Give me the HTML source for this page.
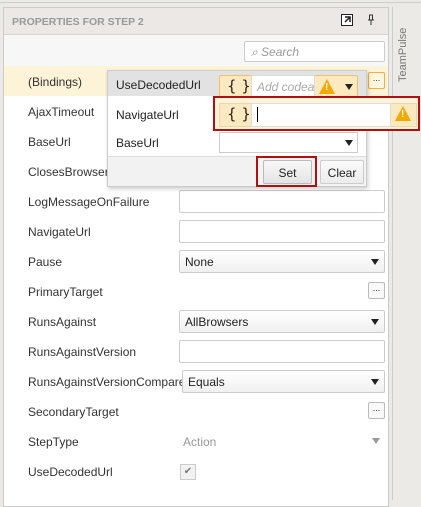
<!DOCTYPE html>
<html><head><style>
*{box-sizing:border-box;margin:0;padding:0}
body{width:421px;height:500px;background:#eceae7;font-family:"Liberation Sans",sans-serif;font-size:12px;color:#333;position:relative;overflow:hidden}
.a{position:absolute}
.panel{left:3px;top:7px;width:386px;height:500px;background:#fff;border:1px solid #ccc}
.hdr{left:4px;top:8px;width:384px;height:27px;background:#ebe8e5;border-bottom:1px solid #d8d5d2;color:#999;font-weight:bold;font-size:10.5px;padding:8px 0 0 8px}
.srow{left:4px;top:35px;width:384px;height:31px;background:#f7f7f7}
.lbl{left:28px;font-size:12px;color:#333}
.inp{left:179px;width:206px;height:23px;border:1px solid #ccc;border-radius:2px;background:#fff}
.sel{background:linear-gradient(#fff,#f0f0f0);color:#222;padding:4px 0 0 5px}
.arr{position:absolute;right:5px;top:8px;width:0;height:0;border-left:4px solid transparent;border-right:4px solid transparent;border-top:6px solid #222}
.dots{left:368px;width:17px;height:17px;border:1px solid #bbb;border-radius:2px;background:#f8f8f8;font-size:9px;text-align:center;line-height:10px}
.warn{width:0;height:0;border-left:8px solid transparent;border-right:8px solid transparent;border-bottom:15px solid #f5a800}
.ex{position:absolute;color:#fff;font-weight:bold;font-size:10px}
.br{font-size:15px;color:#222;font-family:"DejaVu Sans",sans-serif}
</style></head><body>
<div class="a" style="left:0;top:2px;width:421px;height:1px;background:#d0cdca"></div>
<div class="a panel"></div>
<div class="a hdr">PROPERTIES FOR STEP 2</div>
<svg class="a" style="left:341px;top:14px" width="12" height="12"><rect x="0.5" y="0.5" width="11" height="11" fill="#fff" stroke="#222"/><path d="M4 3h5v5M9 3L4 8" stroke="#222" fill="none" stroke-width="1.5"/></svg>
<svg class="a" style="left:367px;top:14px" width="8" height="12"><path d="M2 1h4M2.5 1v5M5.5 1v5M1 6h6M4 6v5" stroke="#333" fill="none"/></svg>
<div class="a srow"></div>
<div class="a" style="left:244px;top:41px;width:141px;height:21px;border:1px solid #ccc;border-radius:2px;background:#fff;color:#999;font-style:italic;padding:3px 0 0 6px">⌕ Search</div>
<div class="a" style="left:392px;top:7px;width:1px;height:493px;background:#ccc"></div>
<div class="a" style="left:397px;top:22px;width:20px;height:60px;writing-mode:vertical-rl;transform:rotate(180deg);color:#777;font-size:11px">TeamPulse</div>

<div class="a" style="left:4px;top:66px;width:384px;height:30px;background:#fdf3d8"></div>
<div class="a lbl" style="top:75px">(Bindings)</div>
<div class="a dots" style="top:72px;border-color:#f0b040;background:#fff6e0">...</div>
<div class="a lbl" style="top:105px">AjaxTimeout</div>
<div class="a lbl" style="top:135px">BaseUrl</div>
<div class="a lbl" style="top:165px">ClosesBrowser</div>
<div class="a lbl" style="top:195px">LogMessageOnFailure</div>
<div class="a inp" style="top:190px"></div>
<div class="a lbl" style="top:225px">NavigateUrl</div>
<div class="a inp" style="top:220px"></div>
<div class="a lbl" style="top:255px">Pause</div>
<div class="a inp sel" style="top:250px">None<span class="arr"></span></div>
<div class="a lbl" style="top:285px">PrimaryTarget</div>
<div class="a dots" style="top:282px">...</div>
<div class="a lbl" style="top:315px">RunsAgainst</div>
<div class="a inp sel" style="top:310px">AllBrowsers<span class="arr"></span></div>
<div class="a lbl" style="top:345px">RunsAgainstVersion</div>
<div class="a inp" style="top:340px"></div>
<div class="a lbl" style="top:375px">RunsAgainstVersionCompare</div>
<div class="a inp sel" style="top:370px;left:182px;width:203px">Equals<span class="arr"></span></div>
<div class="a lbl" style="top:405px">SecondaryTarget</div>
<div class="a dots" style="top:402px">...</div>
<div class="a lbl" style="top:435px">StepType</div>
<div class="a" style="left:183px;top:435px;color:#999">Action</div>
<div class="a" style="left:372px;top:438px;border-left:4px solid transparent;border-right:4px solid transparent;border-top:6px solid #999"></div>
<div class="a lbl" style="top:465px">UseDecodedUrl</div>
<div class="a" style="left:180px;top:464px;width:16px;height:16px;border:1px solid #ccc;background:#f2f2f2;color:#777;font-size:10px;text-align:center;line-height:14px">✔</div>

<!-- popup -->
<div class="a" style="left:107px;top:70px;width:260px;height:117px;background:#fff;border:1px solid #ccc;box-shadow:1px 2px 4px rgba(0,0,0,.2)"></div>
<div class="a" style="left:108px;top:71px;width:258px;height:25px;background:#e2e2e2"></div>
<div class="a" style="left:116px;top:78px;color:#222">UseDecodedUrl</div>
<div class="a" style="left:116px;top:108px;color:#222">NavigateUrl</div>
<div class="a" style="left:116px;top:136px;color:#222">BaseUrl</div>
<div class="a" style="left:108px;top:156px;width:258px;height:30px;background:#f2f2f2;border-top:1px solid #ddd"></div>
<div class="a" style="left:219px;top:75px;width:139px;height:23px;border:1px solid #f0c070;background:#fde9bf;border-radius:2px"></div>
<div class="a br" style="left:227px;top:77px">{ }</div>
<div class="a" style="left:251px;top:75px;width:64px;height:23px;background:#fff;border:1px solid #ddd;color:#aaa;font-style:italic;padding:4px 0 0 5px;overflow:hidden;white-space:nowrap">Add codea</div>
<div class="a warn" style="left:319px;top:79px"><span class="ex" style="left:-2px;top:3px">!</span></div>
<div class="a" style="left:345px;top:84px;border-left:4px solid transparent;border-right:4px solid transparent;border-top:6px solid #222"></div>
<div class="a" style="left:219px;top:132px;width:139px;height:21px;border:1px solid #ccc;background:#fff"></div>
<div class="a" style="left:345px;top:140px;border-left:4px solid transparent;border-right:4px solid transparent;border-top:6px solid #222"></div>

<div class="a" style="left:213px;top:96px;width:207px;height:35px;border:2px solid #b01010;background:#fdf3d8"></div>
<div class="a" style="left:219px;top:103px;width:198px;height:24px;border:1px solid #e8d8b0;background:#fde9bf"></div>
<div class="a br" style="left:227px;top:105px">{ }</div>
<div class="a" style="left:251px;top:103px;width:140px;height:24px;background:#fff;border:1px solid #ddd"></div>
<div class="a" style="left:257px;top:107px;width:1px;height:15px;background:#000"></div>
<div class="a warn" style="left:395px;top:106px"><span class="ex" style="left:-2px;top:3px">!</span></div>

<div class="a" style="left:256px;top:156px;width:61px;height:31px;border:2px solid #b01010"></div>
<div class="a" style="left:263px;top:160px;width:49px;height:24px;border:1px solid #bbb;border-radius:2px;background:linear-gradient(#f8f8f8,#e4e4e4);text-align:center;padding-top:5px;color:#222">Set</div>
<div class="a" style="left:320px;top:160px;width:44px;height:24px;border:1px solid #ccc;border-radius:2px;background:linear-gradient(#fafafa,#ececec);text-align:center;padding-top:5px;color:#222">Clear</div>
</body></html>
